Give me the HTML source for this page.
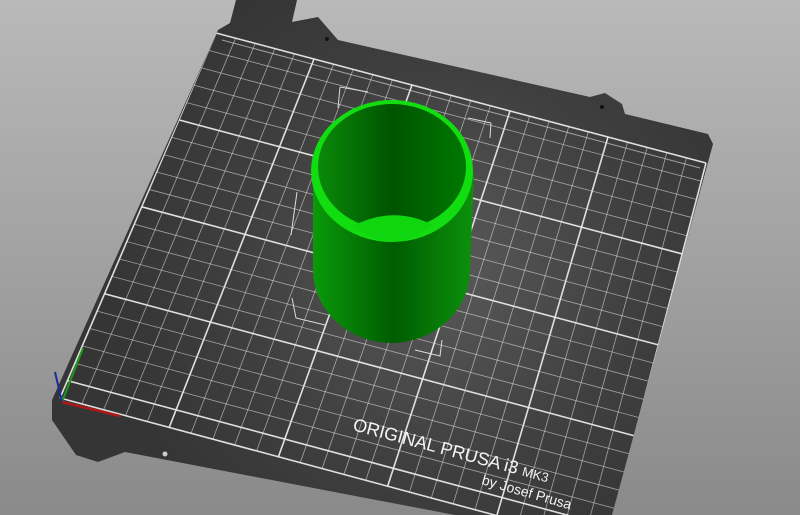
<!DOCTYPE html>
<html><head><style>
html,body{margin:0;padding:0;width:800px;height:515px;overflow:hidden;background:linear-gradient(#b9b9b9,#8a8a8a);}
svg{position:absolute;left:0;top:0}
</style></head><body>
<svg width="800" height="515" viewBox="0 0 800 515" xmlns="http://www.w3.org/2000/svg">
<defs>
<radialGradient id="bed" cx="440" cy="270" r="330" gradientUnits="userSpaceOnUse">
<stop offset="0" stop-color="#5a5a5a"/><stop offset="0.6" stop-color="#3f3f3f"/><stop offset="1" stop-color="#353535"/>
</radialGradient>
<linearGradient id="body" x1="0" x2="1" y1="0" y2="0">
<stop offset="0" stop-color="#0a9a0a"/><stop offset="0.5" stop-color="#005c00"/><stop offset="1" stop-color="#0c920c"/>
</linearGradient>
<linearGradient id="inner" x1="0" x2="1">
<stop offset="0" stop-color="#0a8a0a"/><stop offset="0.5" stop-color="#005400"/><stop offset="1" stop-color="#007800"/>
</linearGradient>
<clipPath id="bc"><path d="M218,30 L713,144 L612,515 L455,515 L52,410 Z"/></clipPath>
</defs>
<path d="M236,0 L297,0 L292,22 L318,17 L338,40 L590,97 L605,93 L622,104 L625,114 L708,134 L713,144 L612,515 L455,515 L125,452 L98,462 L76,455 L52,420 L52,400 L218,30 L230,23 Z" fill="url(#bed)"/>
<g id="grid" stroke="#e8e8e8" fill="none" clip-path="url(#bc)"></g>
<circle cx="327" cy="39" r="2" fill="#111"/><circle cx="602" cy="107" r="2" fill="#111"/><circle cx="165" cy="454" r="2.5" fill="#ccc"/>
<g stroke="#ddd" stroke-width="1" fill="none">
<path d="M340,87 L338,108 M340,87 L368,92 M491,123 L490,138 M491,123 L468,118 M297,192 L291,235 M440,236 L435,283 M415,252 L440,263 L445,230 M292,298 L296,318 L325,325 M415,350 L440,356 L442,340"/>
</g>
<path d="M313,172 L313,270 A79,73 0 0 0 392,343 A79,73 0 0 0 470,270 L474,172 Z" fill="url(#body)"/>
<ellipse cx="392" cy="171" rx="81" ry="71" fill="#11dd11"/>
<ellipse cx="392" cy="167" rx="74" ry="63" fill="url(#inner)"/>
<path d="M353,226 Q393,205 433,225 Q415,240 392,241 Q370,240 353,226 Z" fill="#10d610"/>
<g stroke-width="2" fill="none">
<path d="M62,402 L83,348" stroke="#1a9a1a"/>
<path d="M62,402 L55,372" stroke="#1a2aa0"/>
<path d="M62,402 L120,416" stroke="#b01818" stroke-width="2.5"/>
</g>
<text x="0" y="0" transform="translate(352,430) rotate(15)" fill="#f4f4f4" font-family="Liberation Sans, sans-serif" font-size="18">ORIGINAL PRUSA i3 <tspan font-size="13">MK3</tspan></text>
<text x="0" y="0" transform="translate(481,484) rotate(16)" fill="#f4f4f4" font-family="Liberation Sans, sans-serif" font-size="14">by Josef Prusa</text>
</svg>
<script>
var g=document.getElementById('grid');
var TL=[216,33],TR=[706,163],BL=[60,398],BR=[606,545];
function P(u,v){var t=[TL[0]+(TR[0]-TL[0])*u,TL[1]+(TR[1]-TL[1])*u],b=[BL[0]+(BR[0]-BL[0])*u,BL[1]+(BR[1]-BL[1])*u];return [t[0]+(b[0]-t[0])*v,t[1]+(b[1]-t[1])*v];}
function L(a,b,w){var l=document.createElementNS('http://www.w3.org/2000/svg','line');l.setAttribute('x1',a[0]);l.setAttribute('y1',a[1]);l.setAttribute('x2',b[0]);l.setAttribute('y2',b[1]);l.setAttribute('stroke-width',w);l.setAttribute('stroke-opacity',w>1?0.95:0.6);g.appendChild(l);}
for(var i=0;i<=25;i++){var u=i/25;L(P(u,0),P(u,1),i%5==0?1.6:0.8);}
for(var j=0;j<=21;j++){var v=j/21;L(P(0,v),P(1,v),(j%5==0||j==21)?1.6:0.8);}
L([222,40],[700,168],1);
</script>
</body></html>
